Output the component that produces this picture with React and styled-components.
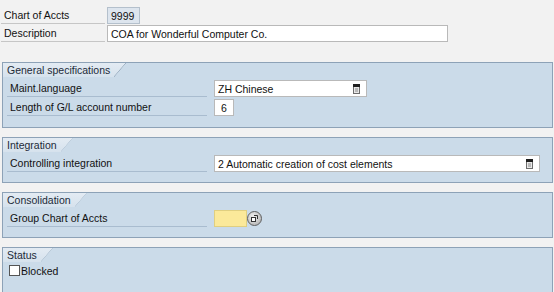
import React from "react";
import styled, { createGlobalStyle, css } from "styled-components";

const Global = createGlobalStyle`
  html, body { margin: 0; padding: 0; background: #f2f2f2; }
  body { font-family: "Liberation Sans", Arial, sans-serif; font-size: 10.5px; color: #111; }
`;

const Page = styled.div`
  width: 554px;
  height: 292px;
  overflow: hidden;
  background: #f2f2f2;
  padding-top: 7px;
  box-sizing: border-box;
`;

const Header = styled.div`
  display: flex;
  flex-direction: column;
  gap: 1px;
  padding-left: 1px;
`;

const Row = styled.div`
  display: flex;
  align-items: stretch;
  height: ${(p) => p.$h || 17}px;
`;

const Label = styled.div`
  width: ${(p) => p.$w}px;
  margin-right: ${(p) => p.$mr || 0}px;
  padding-left: 3px;
  box-sizing: border-box;
  display: flex;
  align-items: center;
  border-bottom: 1px solid ${(p) => (p.$inGroup ? "#a9bccf" : "#c6c6c6")};
  white-space: nowrap;
`;

const Field = styled.div`
  width: ${(p) => p.$w}px;
  box-sizing: border-box;
  display: flex;
  align-items: center;
  justify-content: ${(p) => (p.$center ? "center" : "flex-start")};
  padding: 0 3px;
  border: 1px solid #b9b9b9;
  background: #fff;
  white-space: nowrap;
  position: relative;
  ${(p) =>
    p.$display &&
    css`
      background: #dde5ee;
      border-color: #b4c0cc;
    `}
  ${(p) =>
    p.$required &&
    css`
      background: #fbe99a;
      border-color: #e0cf80;
    `}
`;

const Groups = styled.div`
  display: flex;
  flex-direction: column;
  gap: 9px;
  margin-top: 20px;
  padding-left: 2px;
`;

const Group = styled.div`
  width: 551px;
  box-sizing: border-box;
  border: 1px solid #8da2b7;
  background: #cbdbe9;
  padding-bottom: ${(p) => p.$pb ?? 11}px;
  display: flex;
  flex-direction: column;
`;

const Tab = styled.div`
  align-self: flex-start;
  position: relative;
  height: 14px;
  line-height: 14px;
  padding: 0 16px 0 4px;
  color: #1c2a38;
  white-space: nowrap;
  background: linear-gradient(#e3ebf3, #d6e2ed);
  clip-path: polygon(0 0, 100% 0, calc(100% - 12px) 100%, 0 100%);
  &::after {
    content: "";
    position: absolute;
    right: 0;
    top: 0;
    width: 12px;
    height: 14px;
    background: linear-gradient(
      to top left,
      transparent calc(50% - 0.8px),
      #8da2b7 50%,
      transparent calc(50% + 0.8px)
    );
  }
`;

const GroupRows = styled.div`
  display: flex;
  flex-direction: column;
  gap: 2px;
  padding-top: 3px;
  padding-left: 4px;
`;

const PickIcon = styled.svg`
  position: absolute;
  right: 6px;
  top: 3px;
`;

const DropIcon = () => (
  <PickIcon width="7" height="10" viewBox="0 0 7 10">
    <rect x="0.5" y="0.5" width="6" height="9" fill="#e8e8e8" stroke="#6d6d6d" />
    <rect x="0" y="0" width="7" height="3" fill="#1e1e1e" />
    <line x1="2" y1="5" x2="5" y2="5" stroke="#8a8a8a" />
    <line x1="2" y1="7" x2="5" y2="7" stroke="#8a8a8a" />
  </PickIcon>
);

const F4Button = styled.div`
  width: 15px;
  height: 15px;
  margin-top: 1px;
  border-radius: 50%;
  box-sizing: border-box;
  border: 1px solid #5e5e5e;
  background: radial-gradient(circle at 40% 35%, #f0f0f0, #a9a9a9);
  display: flex;
  align-items: center;
  justify-content: center;
`;

const CheckRow = styled.label`
  display: flex;
  align-items: center;
  gap: 1px;
  height: 17px;
  padding-left: 6px;
`;

const Box = styled.span`
  width: 11px;
  height: 11px;
  box-sizing: border-box;
  border: 1px solid #555;
  background: #fff;
`;

export default function App() {
  return (
    <Page>
      <Global />
      <Header>
        <Row>
          <Label $w={104} $mr={2}>Chart of Accts</Label>
          <Field $w={33} $display>9999</Field>
        </Row>
        <Row>
          <Label $w={104} $mr={2}>Description</Label>
          <Field $w={341}>COA for Wonderful Computer Co.</Field>
        </Row>
      </Header>
      <Groups>
        <Group>
          <Tab>General specifications</Tab>
          <GroupRows>
            <Row>
              <Label $w={200} $mr={7} $inGroup>Maint.language</Label>
              <Field $w={153}>
                ZH Chinese
                <DropIcon />
              </Field>
            </Row>
            <Row>
              <Label $w={200} $mr={7} $inGroup>Length of G/L account number</Label>
              <Field $w={20} $center>6</Field>
            </Row>
          </GroupRows>
        </Group>
        <Group $pb={10}>
          <Tab>Integration</Tab>
          <GroupRows>
            <Row>
              <Label $w={200} $mr={7} $inGroup>Controlling integration</Label>
              <Field $w={326}>
                2 Automatic creation of cost elements
                <DropIcon />
              </Field>
            </Row>
          </GroupRows>
        </Group>
        <Group $pb={10}>
          <Tab>Consolidation</Tab>
          <GroupRows>
            <Row>
              <Label $w={200} $mr={7} $inGroup>Group Chart of Accts</Label>
              <Field $w={33} $required />
              <F4Button>
                <svg width="7" height="7" viewBox="0 0 7 7">
                  <rect x="0.5" y="2.5" width="4" height="4" fill="#fff" stroke="#333" />
                  <path d="M3 0.5 H6.5 V4" fill="none" stroke="#333" />
                </svg>
              </F4Button>
            </Row>
          </GroupRows>
        </Group>
        <Group $pb={30}>
          <Tab>Status</Tab>
          <CheckRow>
            <Box />
            Blocked
          </CheckRow>
        </Group>
      </Groups>
    </Page>
  );
}
